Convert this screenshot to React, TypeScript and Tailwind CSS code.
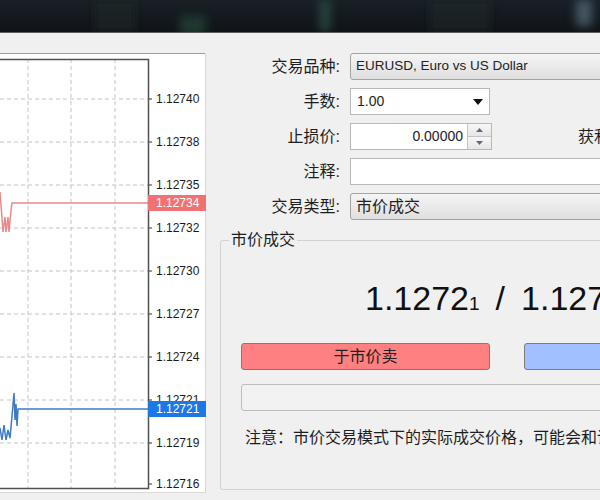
import React from 'react';

const gridY = [99, 142, 185, 228, 271, 314, 357, 400, 443];
const gridX = [28, 71, 115];
const axis = [
  { y: 99, t: '1.12740' },
  { y: 142, t: '1.12738' },
  { y: 185, t: '1.12735' },
  { y: 228, t: '1.12732' },
  { y: 271, t: '1.12730' },
  { y: 314, t: '1.12727' },
  { y: 357, t: '1.12724' },
  { y: 400, t: '1.12721' },
  { y: 443, t: '1.12719' },
  { y: 484, t: '1.12716' },
];

function TopStrip() {
  return (
    <div className="h-[33px] shrink-0 bg-[#13181d] border-b border-[#5a5e63]">
      <svg width="600" height="32" className="block">
        <defs>
          <filter id="blur" x="-50%" y="-50%" width="200%" height="200%">
            <feGaussianBlur stdDeviation="5" />
          </filter>
          <linearGradient id="sky" x1="0" y1="0" x2="0" y2="1">
            <stop offset="0" stopColor="#182026" />
            <stop offset="1" stopColor="#0f1317" />
          </linearGradient>
        </defs>
        <rect width="600" height="32" fill="url(#sky)" />
        <g filter="url(#blur)">
          <rect x="180" y="16" width="26" height="20" fill="#2a5a45" opacity="0.5" />
          <rect x="320" y="0" width="10" height="32" fill="#3a6a5c" opacity="0.55" />
          <rect x="95" y="0" width="40" height="32" fill="#1e2a28" opacity="0.6" />
          <rect x="576" y="0" width="16" height="26" fill="#6a8798" opacity="0.55" />
          <rect x="430" y="0" width="60" height="32" fill="#1a2628" opacity="0.6" />
        </g>
      </svg>
    </div>
  );
}

function Chart() {
  return (
    <svg width="207" height="447" viewBox="0 53 207 447" className="block">
      <rect x="0" y="53" width="206" height="440" fill="#ffffff" />
      <line x1="0" y1="53.5" x2="206" y2="53.5" stroke="#a0a0a0" />
      <line x1="205.5" y1="53" x2="205.5" y2="493" stroke="#d8d8d8" />
      <line x1="0" y1="492.5" x2="206" y2="492.5" stroke="#d8d8d8" />
      {gridY.map((y) => (
        <line key={y} x1="0" y1={y} x2="148" y2={y} stroke="#c4c4c4" strokeDasharray="4 3" />
      ))}
      {gridX.map((x) => (
        <line key={x} x1={x} y1="59" x2={x} y2="488" stroke="#c4c4c4" strokeDasharray="4 3" />
      ))}
      <polyline
        points="0,192 1,205 3,232 5,217 6,232 8,217 9,232 11,210 12,203 148,203"
        fill="none"
        stroke="#e88a8a"
        strokeWidth="1.5"
      />
      <polyline
        points="0,428 2,440 4,425 6,440 8,430 10,438 12,416 14,393 15,420 16,404 17,426 18,409 148,409"
        fill="none"
        stroke="#3f7bc2"
        strokeWidth="1.5"
      />
      <path d="M0 59.5 H148.5 V488.5 H0" fill="none" stroke="#505050" strokeWidth="1.5" />
      {axis.map((a) => (
        <g key={a.t}>
          <line x1="149" y1={a.y} x2="152" y2={a.y} stroke="#333" />
          <text
            x="156"
            y={a.y + 4}
            fontFamily="'Liberation Sans', sans-serif"
            fontSize="12"
            fill="#1a1a1a"
          >
            {a.t}
          </text>
        </g>
      ))}
      <rect x="148" y="195" width="58" height="16" fill="#f07272" />
      <text x="156" y="207" fontFamily="'Liberation Sans', sans-serif" fontSize="12" fill="#ffffff">
        1.12734
      </text>
      <rect x="148" y="401" width="58" height="16" fill="#1b78e6" />
      <text x="156" y="413" fontFamily="'Liberation Sans', sans-serif" fontSize="12" fill="#ffffff">
        1.12721
      </text>
    </svg>
  );
}

function Label({ children }: { children: React.ReactNode }) {
  return (
    <div className="w-[135px] shrink-0 text-right text-[16px] leading-none text-[#1e1e1e] pr-[2px]">
      {children}
    </div>
  );
}

const combo =
  'h-[27px] flex items-center pl-[5px] rounded-[3px] border border-[#a3a3a3] bg-gradient-to-b from-[#f5f5f5] to-[#dfdfdf] text-[#222]';
const textBox = 'h-[27px] flex items-center border border-[#b8b8b8] bg-white text-[#222]';

export default function App() {
  return (
    <div className="w-[600px] h-[500px] overflow-hidden bg-[#f0f0f0] flex flex-col font-['Liberation_Sans','Noto_Sans_CJK_SC',sans-serif]">
      <TopStrip />
      <div className="flex flex-1 min-h-0">
        <div className="w-[207px] shrink-0 pt-[20px]">
          <Chart />
        </div>

        <div className="flex-1 min-w-0 overflow-hidden pt-[20px]">
          <div className="flex flex-col gap-[8px]">
            <div className="flex items-center h-[27px]">
              <Label>交易品种:</Label>
              <div className={`${combo} ml-[8px] w-[300px] shrink-0 text-[13.5px]`}>
                EURUSD, Euro vs US Dollar
              </div>
            </div>

            <div className="flex items-center h-[27px]">
              <Label>手数:</Label>
              <div className={`${textBox} ml-[8px] w-[140px] shrink-0 pl-[6px] pr-[6px] justify-between text-[14px]`}>
                <span>1.00</span>
                <svg width="10" height="6" viewBox="0 0 10 6">
                  <polygon points="0,0 10,0 5,6" fill="#111" />
                </svg>
              </div>
            </div>

            <div className="flex items-center h-[27px]">
              <Label>止损价:</Label>
              <div className={`${textBox} ml-[8px] w-[142px] shrink-0 text-[14px]`}>
                <span className="flex-1 text-right pr-[4px]">0.00000</span>
                <div className="w-[24px] h-full flex flex-col border-l border-[#c4c4c4]">
                  <div className="flex-1 flex items-center justify-center bg-gradient-to-b from-[#f7f7f7] to-[#e6e6e6] border-b border-[#c4c4c4]">
                    <svg width="7" height="4" viewBox="0 0 7 4">
                      <polygon points="0,4 7,4 3.5,0" fill="#5a6b86" />
                    </svg>
                  </div>
                  <div className="flex-1 flex items-center justify-center bg-gradient-to-b from-[#f7f7f7] to-[#e6e6e6]">
                    <svg width="7" height="4" viewBox="0 0 7 4">
                      <polygon points="0,0 7,0 3.5,4" fill="#5a6b86" />
                    </svg>
                  </div>
                </div>
              </div>
              <div className="ml-[86px] shrink-0 whitespace-nowrap text-[16px] leading-none text-[#1e1e1e]">获利价:</div>
            </div>

            <div className="flex items-center h-[27px]">
              <Label>注释:</Label>
              <div className={`${textBox} ml-[8px] w-[300px] shrink-0`} />
            </div>

            <div className="flex items-center h-[27px]">
              <Label>交易类型:</Label>
              <div className={`${combo} ml-[8px] w-[300px] shrink-0 text-[16px]`}>市价成交</div>
            </div>
          </div>

          <fieldset className="ml-[13px] mt-[10px] w-[600px] h-[260px] border border-[#d2d2d2] rounded-[3px] pl-[20px] pr-0 pb-0">
            <legend className="-ml-[12px] px-[2px] text-[16px] leading-[20px] text-[#1e1e1e]">市价成交</legend>

            <div className="mt-[28px] ml-[124px] h-[40px] flex items-baseline whitespace-nowrap text-[34px] leading-[40px] text-[#111]">
              <span>1.1272</span>
              <span className="text-[19px]">1</span>
              <span className="mx-[16px]">/</span>
              <span>1.1273</span>
              <span className="text-[19px]">4</span>
            </div>

            <div className="mt-[25px] flex gap-[34px]">
              <div className="w-[249px] h-[27px] shrink-0 flex items-center justify-center rounded-[3px] border border-[#7c7c7c] bg-[#ff8080] text-[16px] text-[#222]">
                于市价卖
              </div>
              <div className="w-[249px] h-[27px] shrink-0 flex items-center justify-center rounded-[3px] border border-[#7c7c7c] bg-[#a0c0ff] text-[16px] text-[#222]">
                于市价买
              </div>
            </div>

            <div className="mt-[14px] w-[560px] h-[27px] rounded-[3px] border border-[#bdbdbd] bg-[#f2f2f2]" />

            <div className="mt-[17px] ml-[4px] h-[20px] leading-[20px] whitespace-nowrap text-[16px] text-[#1e1e1e]">
              注意：市价交易模式下的实际成交价格，可能会和请求价格有所不同。
            </div>
          </fieldset>
        </div>
      </div>
    </div>
  );
}
